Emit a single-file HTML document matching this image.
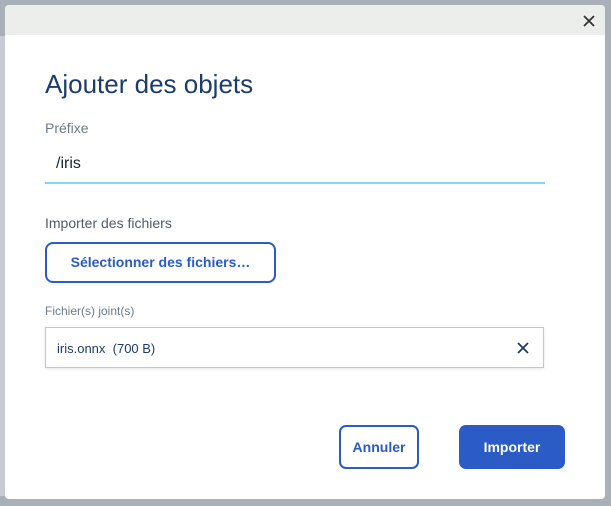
<!DOCTYPE html><html><head><style>
body{margin:0;width:611px;height:506px;background:#a9b0b8;font-family:"Liberation Sans",sans-serif;position:relative;overflow:hidden}
.m{position:absolute;left:5px;top:5px;width:600px;height:494px;background:#fff;border-radius:4px;overflow:hidden}
.h{height:30px;background:#eceeec}
.a{position:absolute}
</style></head><body>
<div class="a" style="left:0;top:36px;width:5px;height:460px;background:#c8ccd2"></div>
<div class="m"><div class="h"></div>
<svg class="a" style="right:10px;top:10px" width="12" height="12"><path d="M1 1L11 11M11 1L1 11" stroke="#333" stroke-width="1.8"/></svg>
<div class="a" style="left:40px;top:64px;font-size:26px;color:#1d3c6a">Ajouter des objets</div>
<div class="a" style="left:40px;top:115px;font-size:14px;color:#6b7b8c">Préfixe</div>
<div class="a" style="left:51px;top:150px;font-size:16px;color:#1a2533">/iris</div>
<div class="a" style="left:40px;top:177px;width:500px;height:2px;background:#85d3f5"></div>
<div class="a" style="left:40px;top:210px;font-size:14px;color:#4f5b68">Importer des fichiers</div>
<div class="a" style="left:40px;top:237px;width:227px;height:37px;border:2px solid #2b5bc4;border-radius:8px;color:#2b5bc4;font-weight:bold;font-size:14px;text-align:center;line-height:37px">Sélectionner des fichiers…</div>
<div class="a" style="left:40px;top:299px;font-size:12px;color:#6b7b8c">Fichier(s) joint(s)</div>
<div class="a" style="left:40px;top:322px;width:497px;height:39px;border:1px solid #c4c8cc;box-shadow:0 1px 3px rgba(0,0,0,.1)"></div>
<div class="a" style="left:52px;top:336px;font-size:13px;color:#1d3c6a">iris.onnx&nbsp; (700 B)</div>
<svg class="a" style="left:512px;top:337px" width="12" height="12"><path d="M1 1L11 11M11 1L1 11" stroke="#1d3c6a" stroke-width="1.8"/></svg>
<div class="a" style="left:334px;top:420px;width:76px;height:40px;border:2px solid #2b5bc4;border-radius:7px;color:#2b5bc4;font-weight:bold;font-size:14px;text-align:center;line-height:40px">Annuler</div>
<div class="a" style="left:454px;top:420px;width:106px;height:44px;background:#2b5bc4;border-radius:7px;color:#fff;font-weight:bold;font-size:14px;text-align:center;line-height:44px">Importer</div>
</div></body></html>
